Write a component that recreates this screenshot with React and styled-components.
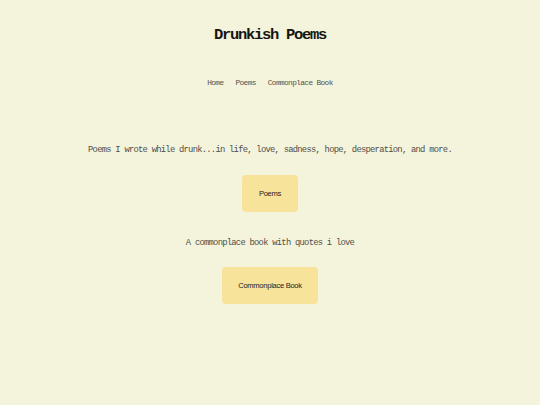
import React from "react";
import styled, { createGlobalStyle } from "styled-components";

const GlobalStyle = createGlobalStyle`
  html, body {
    margin: 0;
    padding: 0;
    background: #f4f3db;
  }
  body {
    font-family: "Liberation Mono", "Courier New", monospace;
  }
`;

const links = ["Home", "Poems", "Commonplace Book"];

const App = () => {
  return (
    <>
      <GlobalStyle />
      <Page>
        <Title>Drunkish Poems</Title>
        <Nav>
          {links.map((l) => (
            <NavLink key={l} href="#">
              {l}
            </NavLink>
          ))}
        </Nav>
        <Main>
          <Blurb>
            Poems I wrote while drunk...in life, love, sadness, hope,
            desperation, and more.
          </Blurb>
          <Button>Poems</Button>
          <Blurb top="26px">A commonplace book with quotes i love</Blurb>
          <Button>Commonplace Book</Button>
        </Main>
      </Page>
    </>
  );
};

export default App;

const Page = styled.div`
  width: 100%;
  min-height: 405px;
  display: flex;
  flex-direction: column;
  align-items: center;
  padding-top: 26px;
  box-sizing: border-box;
`;

const Title = styled.h1`
  margin: 0;
  font-family: "Liberation Mono", "Courier New", monospace;
  font-size: 15.5px;
  line-height: 18px;
  letter-spacing: -1.3px;
  font-weight: 700;
  color: #161613;
`;

const Nav = styled.nav`
  display: flex;
  gap: 12px;
  margin-top: 34px;
`;

const NavLink = styled.a`
  font-size: 7.8px;
  line-height: 10px;
  letter-spacing: -0.62px;
  color: #55554f;
  text-decoration: none;
`;

const Main = styled.main`
  display: flex;
  flex-direction: column;
  align-items: center;
  margin-top: 57px;
`;

const Blurb = styled.p`
  margin: ${({ top }) => top || "0"} 0 19.5px;
  font-size: 8.8px;
  line-height: 10px;
  letter-spacing: -0.73px;
  color: #4f4f49;
`;

const Button = styled.button`
  border: none;
  border-radius: 4px;
  background: #f8e39b;
  padding: 14px 16.5px;
  font-family: "Liberation Sans", Arial, sans-serif;
  font-size: 7.6px;
  line-height: 9px;
  letter-spacing: -0.3px;
  color: #24221c;
  cursor: pointer;
`;
